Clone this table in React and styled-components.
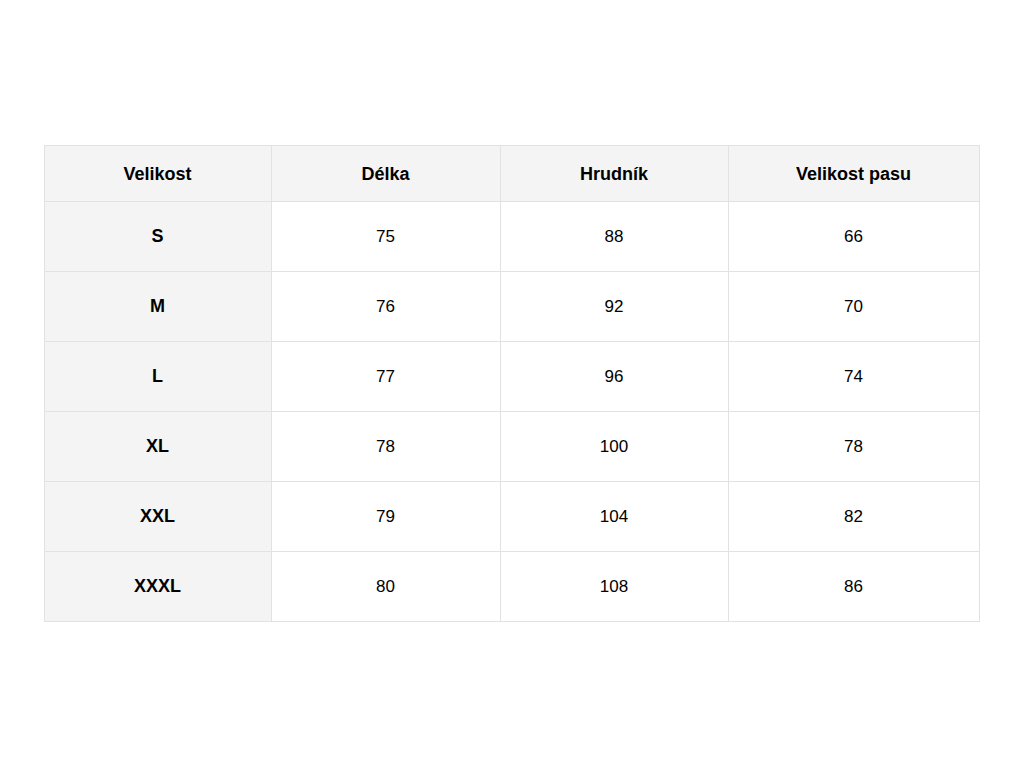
import styled, { createGlobalStyle } from "styled-components";

const GlobalStyle = createGlobalStyle`
    html, body {
        margin: 0;
        padding: 0;
        background: #fff;
    }
`;

const Page = styled.div`
    display: flex;
    justify-content: center;
    box-sizing: border-box;
    height: 768px;
    padding: 145px 45px 0 44px;
    font-family: "Liberation Sans", Arial, sans-serif;
    color: #000;
`;

const Table = styled.table`
    width: 935px;
    height: fit-content;
    border-collapse: collapse;
    table-layout: fixed;
    font-size: 17px;
`;

const HeadCell = styled.th`
    height: 53px;
    padding: 2px 0 0;
    background-color: #f4f4f4;
    border: 1px solid #e2e2e2;
    font-size: 18px;
    font-weight: bold;
    text-align: center;
`;

const Cell = styled.td`
    height: 69px;
    padding: 0;
    border: 1px solid #e2e2e2;
    text-align: center;
    background-color: ${(p) => (p.$label ? "#f4f4f4" : "#fff")};
    font-size: ${(p) => (p.$label ? "18px" : "17px")};
    font-weight: ${(p) => (p.$label ? "bold" : "normal")};
`;

const rows = [
    ["S", 75, 88, 66],
    ["M", 76, 92, 70],
    ["L", 77, 96, 74],
    ["XL", 78, 100, 78],
    ["XXL", 79, 104, 82],
    ["XXXL", 80, 108, 86],
];

export default function App() {
    return (
        <Page>
            <GlobalStyle />
            <Table>
                <colgroup>
                    <col style={{ width: 227 }} />
                    <col style={{ width: 229 }} />
                    <col style={{ width: 228 }} />
                    <col style={{ width: 251 }} />
                </colgroup>
                <thead>
                    <tr>
                        <HeadCell>Velikost</HeadCell>
                        <HeadCell>Délka</HeadCell>
                        <HeadCell>Hrudník</HeadCell>
                        <HeadCell>Velikost pasu</HeadCell>
                    </tr>
                </thead>
                <tbody>
                    {rows.map(([size, length, chest, waist]) => (
                        <tr key={size}>
                            <Cell $label>{size}</Cell>
                            <Cell>{length}</Cell>
                            <Cell>{chest}</Cell>
                            <Cell>{waist}</Cell>
                        </tr>
                    ))}
                </tbody>
            </Table>
        </Page>
    );
}
